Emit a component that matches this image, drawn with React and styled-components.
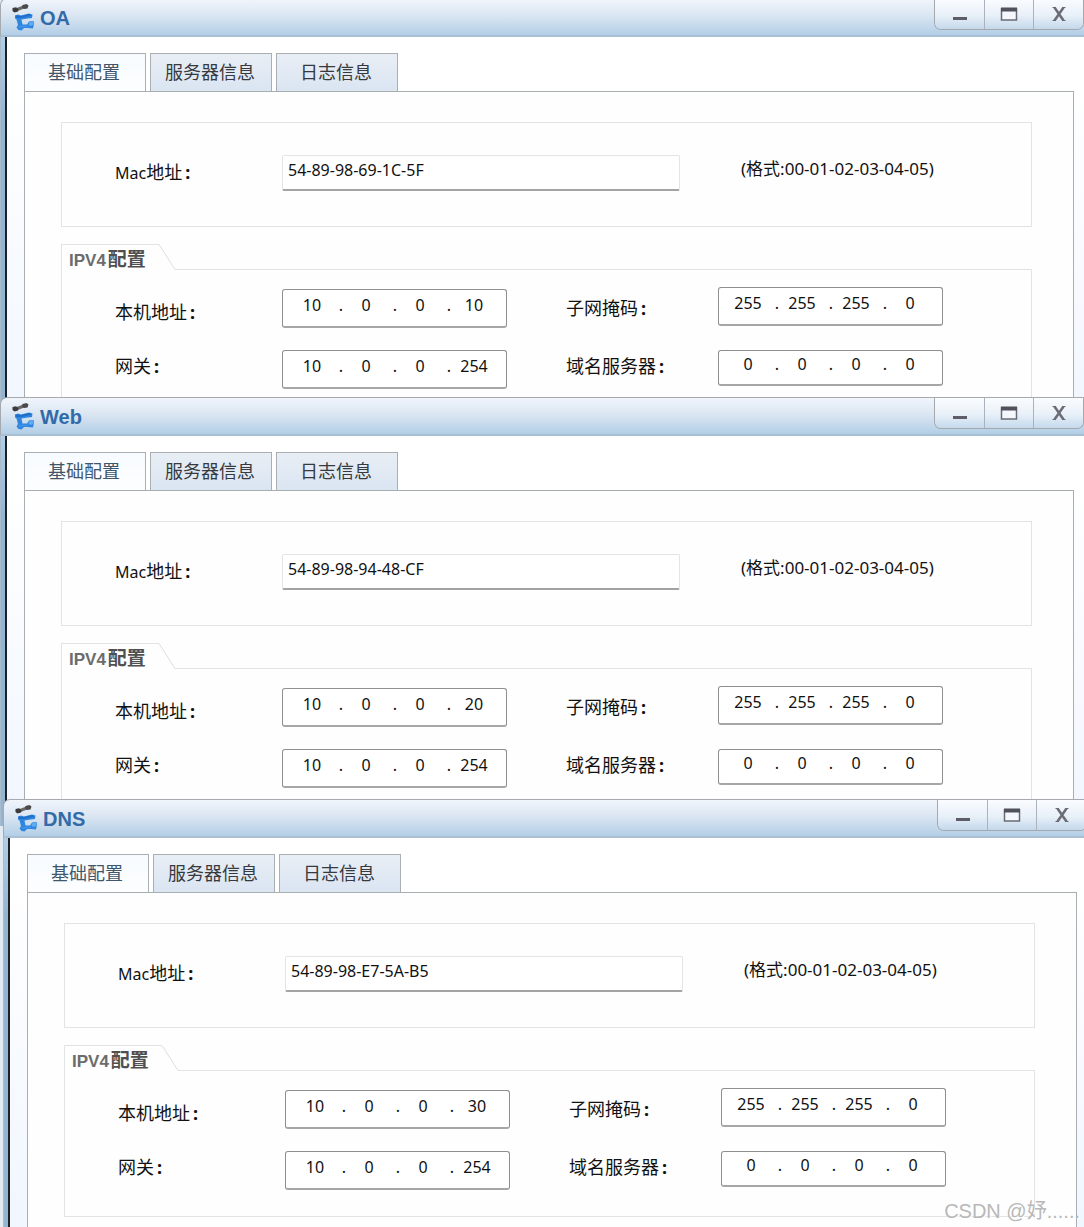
import React, { useState } from "react";
import styled, { createGlobalStyle } from "styled-components";

const windows = [
    { id: "oa", title: "OA", mac: "54-89-98-69-1C-5F", ip: [10, 0, 0, 10], pull: 2, shift: 0 },
    { id: "web", title: "Web", mac: "54-89-98-94-48-CF", ip: [10, 0, 0, 20], pull: 30, shift: 0 },
    { id: "dns", title: "DNS", mac: "54-89-98-E7-5A-B5", ip: [10, 0, 0, 30], pull: 27, shift: 3 },
];

const tabs = ["基础配置", "服务器信息", "日志信息"];

const Logo = () => (
    <svg width="24" height="28" viewBox="0 0 24 28" fill="none" aria-hidden="true">
        <path d="M4 6L13 2.500" stroke="#6a6a6a" strokeWidth="3" />
        <path d="M0.500 4L4 3.300L6.500 5L6 7.500L2.500 8.500L0.500 7Z" fill="#3b3b3b" />
        <path d="M10.500 1L14.500 0L16.500 1.500L15.500 4.500L12 5L10 3.500Z" fill="#4a4a4a" />
        <path d="M3 11.500L6 10.500L9 11.500L17 9.500L20.500 10.500L20 14L16 14.500L9.500 15.500L10.500 20.500L15 20.500L17 17.500L21.500 17L22 19.500L21 24.500L16 24L12 24L9.500 26.500L6.500 26L4.500 23.500L6 21L4.500 15.500L3 14.500Z" fill="#2f86e0" />
        <path d="M3.500 11.500L9 12L17 10L20 11.500L9 14L4 14Z" fill="#1f6fc9" />
        <path d="M17 18.500L21 17.500L21.500 20.500L19 22L16.500 21Z" fill="#62acf2" />
        <path d="M6.500 23L11 22.500L16 22.500" stroke="#3f95ea" strokeWidth="1.500" />
    </svg>
);

const IpField = ({ id, label, value, short }) => (
    <IpBox $short={short} role="group" aria-label={label}>
        {value.map((part, i) => (
            <React.Fragment key={i}>
                {i > 0 && <Dot>.</Dot>}
                <Octet id={i === 0 ? id : undefined} aria-label={`${label} ${i + 1}`} defaultValue={part} />
            </React.Fragment>
        ))}
    </IpBox>
);

const FieldLabel = ({ htmlFor, children }) => (
    <Label htmlFor={htmlFor}>{children}<Colon>:</Colon></Label>
);

const DeviceWindow = ({ id, title, mac, ip, pull, shift }) => {
    const [active, setActive] = useState(0);

    return (
        <Window $pull={pull} $shift={shift}>
            <TitleBar>
                <Logo />
                <Title>{title}</Title>
                <Controls>
                    <Control aria-label="最小化">
                        <svg width="16" height="16" viewBox="0 0 16 16"><path d="M1 12.500H15" stroke="#5c5d66" strokeWidth="3" /></svg>
                    </Control>
                    <Control aria-label="最大化">
                        <svg width="18" height="16" viewBox="0 0 18 16">
                            <path d="M1.500 2V14H16.500V2" fill="#f4f8fc" stroke="#6a6b75" strokeWidth="1.500" />
                            <path d="M1 3.500H17" stroke="#50515b" strokeWidth="4" />
                        </svg>
                    </Control>
                    <Control aria-label="关闭">
                        <svg width="16" height="16" viewBox="0 0 16 16">
                            <path d="M3.500 1.500L12.500 14.500M12.500 1.500L3.500 14.500" stroke="#6b6c75" strokeWidth="2.500" />
                            <path d="M1.500 1.500H5M11 1.500H14.500M1.500 14.500H5M11 14.500H14.500" stroke="#6b6c75" strokeWidth="1" />
                        </svg>
                    </Control>
                </Controls>
            </TitleBar>
            <Frame>
                <Body>
                    <TabList role="tablist">
                        {tabs.map((name, i) => (
                            <Tab key={name} role="tab" aria-selected={i === active} $active={i === active} onClick={() => setActive(i)}>
                                {name}
                            </Tab>
                        ))}
                    </TabList>
                    <Panel>
                        <MacSection>
                            <FieldLabel htmlFor={`${id}-mac`}><Latin>Mac</Latin>地址</FieldLabel>
                            <MacInput id={`${id}-mac`} defaultValue={mac} />
                            <Hint>(格式:00-01-02-03-04-05)</Hint>
                        </MacSection>
                        <Group>
                            <GroupHead>
                                <GroupName>IPV4<span>配置</span></GroupName>
                                <svg width="17" height="26" viewBox="0 0 17 26" fill="none" aria-hidden="true">
                                    <path d="M0 0.500L16 25.500H17" stroke="#dedede" />
                                </svg>
                                <GroupLine />
                            </GroupHead>
                            <GroupBody>
                                <LabelColumn $width={167} $top={30} $gap={30}>
                                    <FieldLabel htmlFor={`${id}-ip`}>本机地址</FieldLabel>
                                    <FieldLabel htmlFor={`${id}-gw`}>网关</FieldLabel>
                                </LabelColumn>
                                <Column $top={19} $gap={22}>
                                    <IpField id={`${id}-ip`} label="本机地址" value={ip} />
                                    <IpField id={`${id}-gw`} label="网关" value={[10, 0, 0, 254]} />
                                </Column>
                                <LabelColumn $width={152} $top={26} $gap={34} $inset={59}>
                                    <FieldLabel htmlFor={`${id}-mask`}>子网掩码</FieldLabel>
                                    <FieldLabel htmlFor={`${id}-dns`}>域名服务器</FieldLabel>
                                </LabelColumn>
                                <Column $top={17} $gap={24}>
                                    <IpField id={`${id}-mask`} label="子网掩码" value={[255, 255, 255, 0]} />
                                    <IpField id={`${id}-dns`} label="域名服务器" value={[0, 0, 0, 0]} short />
                                </Column>
                            </GroupBody>
                        </Group>
                    </Panel>
                </Body>
            </Frame>
        </Window>
    );
};

const App = () => (
    <>
        <GlobalStyle />
        <Desktop>
            {windows.map((w) => <DeviceWindow key={w.id} {...w} />)}
            <Watermark>CSDN @妤......</Watermark>
        </Desktop>
    </>
);

const GlobalStyle = createGlobalStyle`
    * {
        box-sizing: border-box;
    }

    body {
        margin: 0;
        background: #e3ebf2;
        color: #111;
        font-family: "Noto Sans", "Noto Sans CJK SC", sans-serif;
        font-size: 16px;
    }

    button, input {
        font-family: inherit;
        color: inherit;
    }

    svg {
        display: block;
        flex: none;
    }
`

const Desktop = styled.main`
    position: relative;
    overflow: hidden;
    min-width: 1000px;
`

const Window = styled.section`
    position: relative;
    margin-top: ${(p) => -p.$pull}px;
    margin-left: ${(p) => p.$shift}px;
    margin-right: ${(p) => -p.$shift}px;
`

const TitleBar = styled.header`
    display: flex;
    align-items: flex-start;
    height: 39px;
    padding: 5px 0 0 11px;
    border: 1px solid #a6a9ad;
    border-right: none;
    border-bottom: 2px solid #a9bfd4;
    border-radius: 7px 0 0 0;
    background: linear-gradient(#f1f5fc, #dbe6f2 45%, #b2cee6);
`

const Title = styled.h1`
    flex: 1;
    margin: 0 0 0 4px;
    font-family: "Liberation Sans", sans-serif;
    font-size: 20px;
    line-height: 28px;
    font-weight: bold;
    color: #336aa8;
`

const Controls = styled.div`
    display: flex;
    height: 31px;
    margin-top: -5px;
    border: 1px solid #a5a8ad;
    border-top: none;
    border-radius: 0 0 7px 7px;
    overflow: hidden;
`

const Control = styled.button`
    display: flex;
    align-items: center;
    justify-content: center;
    width: 49px;
    padding: 0;
    border: none;
    background: linear-gradient(#fafcff, #e8f0f8 55%, #c4d9ec);

    & + & {
        border-left: 1px solid #a9b2bd;
    }

    &:last-child {
        width: 50px;
    }
`

const Frame = styled.div`
    padding-left: 5px;
    border-left: 1px solid #a9bccb;
    background: linear-gradient(#b2cee6, #93b5d2 80px);
`

const Body = styled.div`
    margin-left: -1px;
    padding: 16px 10px 0 17px;
    border-left: 2px solid #1d2126;
    background: linear-gradient(#fff 40px, #f1f6ff);
`

const TabList = styled.div`
    display: flex;
    gap: 4px;
`

const Tab = styled.button`
    width: 122px;
    height: 38px;
    padding: 0 2px 1px 0;
    border: 1px solid #aaafb4;
    border-bottom: none;
    background: ${(p) => (p.$active ? "linear-gradient(#f7fbff, #fdfeff)" : "linear-gradient(#e9eef5, #dae5f2)")};
    color: ${(p) => (p.$active ? "#40566b" : "#36393e")};
    font-size: 18px;
    line-height: 24px;
`

const Panel = styled.div`
    padding: 30px 41px 11px 36px;
    border: 1px solid #a9aeb1;
    border-bottom: none;
    background: #fefefe;
`

const MacSection = styled.div`
    display: flex;
    align-items: center;
    height: 105px;
    padding: 0 0 4px 53px;
    border: 1px solid #e3e3e3;

    label {
        width: 167px;
    }
`

const Label = styled.label`
    font-size: 18px;
    line-height: 24px;
    white-space: nowrap;
`

const Latin = styled.span`
    font-size: 16px;
`

const Colon = styled.span`
    margin-left: 3px;
    font-weight: bold;
`

const MacInput = styled.input`
    width: 398px;
    height: 36px;
    padding: 0 5px 4px;
    border: 1px solid #e4e4e4;
    border-bottom: 2px solid #a3a3a3;
    border-radius: 2px;
    background: #fff;
    font-size: 16px;
`

const Hint = styled.span`
    padding: 0 0 8px 61px;
    font-size: 17px;
    line-height: 24px;
    white-space: nowrap;
`

const Group = styled.div`
    margin-top: 17px;
`

const GroupHead = styled.div`
    display: flex;
    height: 26px;
`

const GroupName = styled.h2`
    width: 98px;
    margin: 0;
    padding: 3px 0 0 7px;
    border: solid #e3e3e3;
    border-width: 1px 0 0 1px;
    font-family: "Liberation Sans", "Noto Sans CJK SC", sans-serif;
    font-size: 17px;
    line-height: 24px;
    white-space: nowrap;
    color: #6c6c6c;

    span {
        margin-left: 2px;
        font-size: 19px;
        color: #505050;
    }
`

const GroupLine = styled.div`
    flex: 1;
    border-bottom: 1px solid #e3e3e3;
`

const GroupBody = styled.div`
    display: flex;
    align-items: flex-start;
    padding: 0 0 26px 53px;
    border: 1px solid #e3e3e3;
    border-top: none;
`

const Column = styled.div`
    display: flex;
    flex-direction: column;
    gap: ${(p) => p.$gap}px;
    padding-top: ${(p) => p.$top}px;
`

const LabelColumn = styled(Column)`
    width: ${(p) => p.$width}px;
    margin-left: ${(p) => p.$inset || 0}px;
`

const IpBox = styled.div`
    display: flex;
    align-items: center;
    width: 225px;
    height: ${(p) => (p.$short ? 36 : 39)}px;
    padding: 0 0 7px 8px;
    border: 1px solid #8f8f8f;
    border-bottom: 2px solid #a6a6a6;
    border-radius: 3px;
    background: #fff;
`

const Octet = styled.input`
    width: 42px;
    height: 22px;
    padding: 0;
    border: none;
    background: transparent;
    font-size: 16px;
    text-align: center;
`

const Dot = styled.span`
    width: 12px;
    padding-left: 4px;
    line-height: 22px;
    text-align: center;
`

const Watermark = styled.div`
    position: absolute;
    right: 4px;
    bottom: 4px;
    font-family: "Liberation Sans", "Noto Sans CJK SC", sans-serif;
    font-size: 20px;
    line-height: 26px;
    color: #b8b8b8;
    text-shadow: 1px 1px 0 #fff;
`

export default App;
